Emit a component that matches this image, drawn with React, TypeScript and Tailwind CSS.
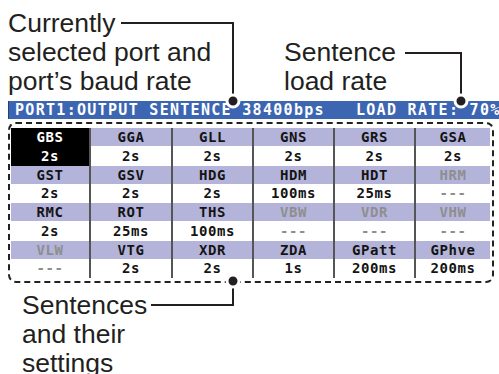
type Cell = { name: string; value: string; selected?: boolean };

const groups: Cell[][] = [
  [
    { name: 'GBS', value: '2s', selected: true },
    { name: 'GGA', value: '2s' },
    { name: 'GLL', value: '2s' },
    { name: 'GNS', value: '2s' },
    { name: 'GRS', value: '2s' },
    { name: 'GSA', value: '2s' },
  ],
  [
    { name: 'GST', value: '2s' },
    { name: 'GSV', value: '2s' },
    { name: 'HDG', value: '2s' },
    { name: 'HDM', value: '100ms' },
    { name: 'HDT', value: '25ms' },
    { name: 'HRM', value: '---' },
  ],
  [
    { name: 'RMC', value: '2s' },
    { name: 'ROT', value: '25ms' },
    { name: 'THS', value: '100ms' },
    { name: 'VBW', value: '---' },
    { name: 'VDR', value: '---' },
    { name: 'VHW', value: '---' },
  ],
  [
    { name: 'VLW', value: '---' },
    { name: 'VTG', value: '2s' },
    { name: 'XDR', value: '2s' },
    { name: 'ZDA', value: '1s' },
    { name: 'GPatt', value: '200ms' },
    { name: 'GPhve', value: '200ms' },
  ],
];

const cellText = (c: Cell) => {
  if (c.selected) return 'text-white';
  if (c.value === '---') return 'text-[#8e8e8e]';
  return 'text-[#141414]';
};

const SentenceTable = () => (
  <div className="grid grid-cols-[78px_82px_81px_81px_81px_76px] font-['DejaVu_Sans_Mono',monospace] text-[14px] font-bold tracking-[0.6px]">
    {groups.map((g, gi) => (
      <div key={gi} className="contents">
        {g.map((c, i) => (
          <div
            key={'h' + i}
            className={`h-[18px] flex items-center justify-center leading-none ${i > 0 ? 'border-l-2 border-[#555]' : ''} ${
              c.selected ? 'bg-black' : 'bg-[#b4b4da]'
            } ${cellText(c)}`}
          >
            {c.name}
          </div>
        ))}
        {g.map((c, i) => (
          <div
            key={'v' + i}
            className={`h-[19.5px] flex items-center justify-center leading-none ${i > 0 ? 'border-l-2 border-[#555]' : ''} ${
              c.selected ? 'bg-black' : 'bg-white'
            } ${cellText(c)}`}
          >
            {c.value}
          </div>
        ))}
      </div>
    ))}
  </div>
);

const Leaders = () => (
  <svg className="absolute inset-0 pointer-events-none" width="499" height="374" viewBox="0 0 499 374">
    <g fill="none" stroke="#231f20" strokeWidth="2">
      <polyline points="121,23 233,23 233,100" />
      <polyline points="405,53 461,53 461,100" />
      <polyline points="151,305 233,305 233,282" />
    </g>
    <g fill="#231f20" stroke="#fff" strokeWidth="3">
      <circle cx="233" cy="101" r="6" />
      <circle cx="461" cy="101" r="6" />
      <circle cx="233" cy="281" r="6" />
    </g>
  </svg>
);

export default function App() {
  const label = "font-['Liberation_Sans',Arial,sans-serif] text-[26.5px] leading-[29px] text-[#231f20]";
  return (
    <div className="relative w-[499px] h-[374px] overflow-hidden bg-white">
      <div className="flex h-[101px]">
        <div className={`w-[284px] pl-[8px] pt-[9px] ${label}`}>
          <div>Currently</div>
          <div>selected port and</div>
          <div>port’s baud rate</div>
        </div>
        <div className={`pt-[38px] ${label}`}>
          <div>Sentence</div>
          <div>load rate</div>
        </div>
      </div>

      <div className="ml-[8px] h-[18px] bg-[#3d66b2] border-l border-[#23407a] pl-[6px] flex items-center overflow-hidden whitespace-pre font-['DejaVu_Sans_Mono',monospace] text-[15px] font-bold tracking-[1.3px] text-white leading-none">
        PORT1:OUTPUT SENTENCE 38400bps   LOAD RATE: 70%
      </div>

      <div className="ml-[8px] mt-[3px] w-[486px] h-[161px] border-2 border-dashed border-[#222] rounded-[8px] pt-[4px] pl-[1px]">
        <SentenceTable />
      </div>

      <div className={`pl-[22px] pt-[8px] ${label}`}>
        <div>Sentences</div>
        <div>and their</div>
        <div>settings</div>
      </div>

      <Leaders />
    </div>
  );
}
